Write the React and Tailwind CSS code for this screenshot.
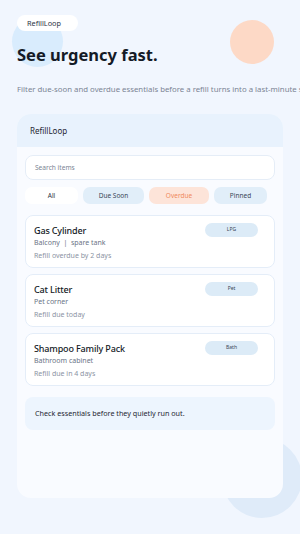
import React, { useState } from "react";

const items = [
  { name: "Gas Cylinder", place: "Balcony  |  spare tank", note: "Refill overdue by 2 days", tag: "LPG" },
  { name: "Cat Litter", place: "Pet corner", note: "Refill due today", tag: "Pet" },
  { name: "Shampoo Family Pack", place: "Bathroom cabinet", note: "Refill due in 4 days", tag: "Bath" },
];

const chips = [
  { label: "All", cls: "w-[53px] bg-white text-[#2b3445]" },
  { label: "Due Soon", cls: "w-[61px] bg-[#e1eef9] text-[#3b4658]" },
  { label: "Overdue", cls: "w-[60px] bg-[#fde4d9] text-[#f08a5d]" },
  { label: "Pinned", cls: "w-[53px] bg-[#e1eef9] text-[#3b4658]" },
];

const App = () => {
  const [active, setActive] = useState("All");

  return (
    <div className="relative w-[300px] h-[534px] overflow-hidden bg-[#f1f6fe] font-['Noto_Sans',sans-serif]">
      {/* decorative blobs */}
      <div className="absolute left-[12px] top-[16px] w-[51px] h-[51px] rounded-full bg-[#d9ecfd]" />
      <div className="absolute left-[230px] top-[20px] w-[44px] h-[44px] rounded-full bg-[#fdd9c6]" />
      <div className="absolute left-[222px] top-[438px] w-[80px] h-[80px] rounded-full bg-[#dfebf9]" />

      <div className="relative px-[17px] pt-[15px]">
        <div className="flex items-center h-[16px] w-[61px] pl-[10px] rounded-full bg-white text-[7.3px] text-[#2b3445]">
          RefillLoop
        </div>
        <h1 className="mt-[13px] text-[16.5px] leading-[22px] font-bold text-[#141a26]">See urgency fast.</h1>
        <p className="mt-[17px] whitespace-nowrap text-[7.8px] leading-[12px] text-[#7b8494]">
          Filter due-soon and overdue essentials before a refill turns into a last-minute scramble.
        </p>

        <div className="mt-[19px] w-[266px] h-[384px] rounded-[14px] bg-[#f9fbff] overflow-hidden">
          <div className="h-[33px] bg-[#e8f2fd] pl-[13px] flex items-center text-[8px] text-[#1f2633]">RefillLoop</div>

          <div className="px-[8px] pt-[8px]">
            <div className="h-[25px] rounded-[8px] bg-white border border-[#e5edf7] flex items-center pl-[9px] text-[6.6px] text-[#7b8494]">
              Search items
            </div>

            <div className="mt-[7px] flex gap-[5px]">
              {chips.map((c) => (
                <button
                  key={c.label}
                  onClick={() => setActive(c.label)}
                  className={`h-[17px] rounded-[7px] text-[6.5px] flex items-center justify-center ${c.cls}`}
                >
                  {c.label}
                </button>
              ))}
            </div>

            <div className="mt-[11px] flex flex-col gap-[6px]">
              {items.map((it) => (
                <div
                  key={it.name}
                  className="h-[53px] rounded-[8px] bg-white border border-[#e4edf8] pl-[8px] pr-[16px] pt-[7px] flex justify-between"
                >
                  <div>
                    <div className="mt-[1px] text-[9px] leading-[13px] tracking-[-0.15px] font-medium text-[#141a26]">{it.name}</div>
                    <div className="mt-[1px] whitespace-pre text-[7px] leading-[10px] text-[#6b7486]">{it.place}</div>
                    <div className="mt-[3px] text-[7px] leading-[10px] text-[#8b93a3]">{it.note}</div>
                  </div>
                  <div className="w-[53px] h-[14px] rounded-full bg-[#dcebf7] flex items-center justify-center text-[5px] text-[#3b4658]">
                    {it.tag}
                  </div>
                </div>
              ))}
            </div>

            <div className="mt-[11px] h-[33px] rounded-[8px] bg-[#edf5fe] flex items-center pl-[10px] text-[7.2px] text-[#1f2633]">
              Check essentials before they quietly run out.
            </div>
          </div>
        </div>
      </div>
    </div>
  );
};

export default App;
